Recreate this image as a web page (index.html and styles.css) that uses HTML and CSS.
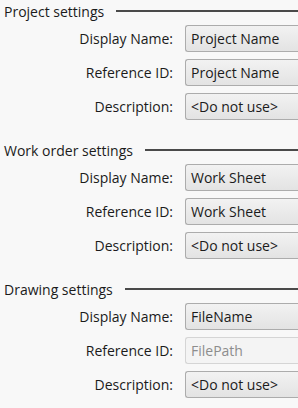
FILE: index.html
```html
<!DOCTYPE html>
<html lang="en">
<head>
  <meta charset="UTF-8">
  <title>Settings</title>
  <link rel="stylesheet" href="styles.css">
</head>
<body>
  <div class="section">
    <div class="section-header"><span>Project settings</span><div class="rule"></div></div>
    <div class="row"><label>Display Name:</label><div class="combo">Project Name</div></div>
    <div class="row"><label>Reference ID:</label><div class="combo">Project Name</div></div>
    <div class="row"><label>Description:</label><div class="combo">&lt;Do not use&gt;</div></div>
  </div>

  <div class="section">
    <div class="section-header"><span>Work order settings</span><div class="rule"></div></div>
    <div class="row"><label>Display Name:</label><div class="combo">Work Sheet</div></div>
    <div class="row"><label>Reference ID:</label><div class="combo">Work Sheet</div></div>
    <div class="row"><label>Description:</label><div class="combo">&lt;Do not use&gt;</div></div>
  </div>

  <div class="section">
    <div class="section-header"><span>Drawing settings</span><div class="rule"></div></div>
    <div class="row"><label>Display Name:</label><div class="combo">FileName</div></div>
    <div class="row"><label>Reference ID:</label><div class="combo disabled">FilePath</div></div>
    <div class="row"><label>Description:</label><div class="combo">&lt;Do not use&gt;</div></div>
  </div>
</body>
</html>
```

FILE: styles.css
```css
body {
  background: #f8f8f8;
  color: #1b1b1b;
  font-family: 'Open Sans', 'Noto Sans', sans-serif;
  font-size: 14px;
  margin: 0;
  padding: 0 0 0 4px;
  overflow: hidden;
}
.section {
  margin-bottom: 19px;
}
.section-header {
  display: flex;
  align-items: center;
  height: 22px;
  margin-bottom: 3px;
}
.section-header .rule {
  flex: 1;
  height: 2px;
  background: #4a4a4a;
  margin-left: 12px;
}
.row {
  display: flex;
  align-items: center;
  margin-bottom: 7px;
}
.row label {
  width: 169px;
  text-align: right;
  flex-shrink: 0;
}
.combo {
  flex: 1;
  margin-left: 12px;
  height: 25px;
  line-height: 25px;
  padding-left: 5px;
  border: 1px solid #acacac;
  border-right: none;
  border-radius: 3px 0 0 3px;
  background: linear-gradient(#f2f2f2, #e3e3e3);
  white-space: nowrap;
}
.combo.disabled {
  color: #8d8d8d;
  border-color: #d5d5d5;
  background: #f4f4f4;
}
```
